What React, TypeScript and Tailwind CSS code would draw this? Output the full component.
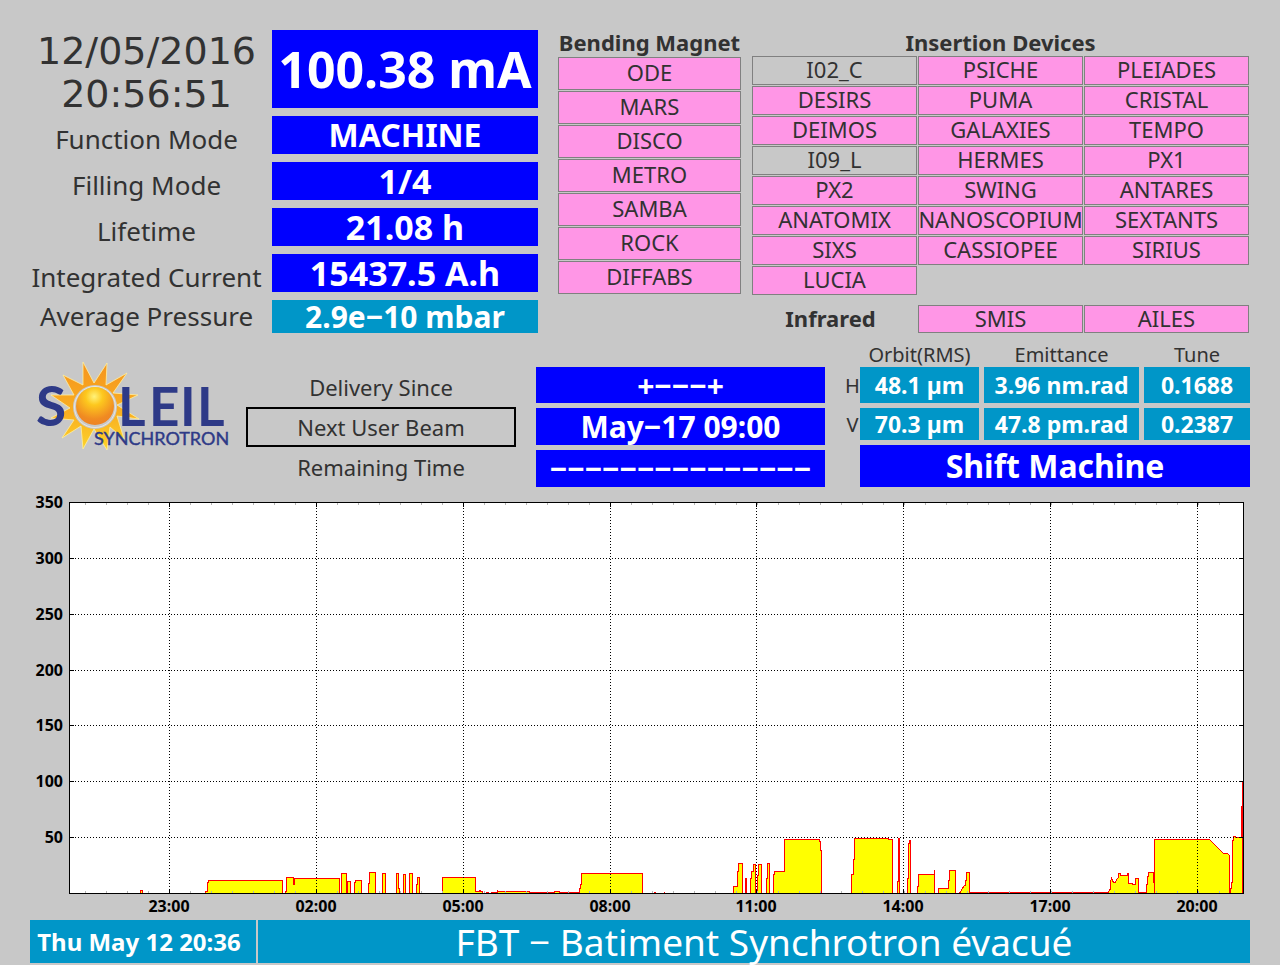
import clsx from 'clsx'

const labels = ['Function Mode', 'Filling Mode', 'Lifetime', 'Integrated Current']

const bendingMagnets = ['ODE', 'MARS', 'DISCO', 'METRO', 'SAMBA', 'ROCK', 'DIFFABS']

const insertionDevices = [
  'I02_C', 'PSICHE', 'PLEIADES',
  'DESIRS', 'PUMA', 'CRISTAL',
  'DEIMOS', 'GALAXIES', 'TEMPO',
  'I09_L', 'HERMES', 'PX1',
  'PX2', 'SWING', 'ANTARES',
  'ANATOMIX', 'NANOSCOPIUM', 'SEXTANTS',
  'SIXS', 'CASSIOPEE', 'SIRIUS',
  'LUCIA'
]

// front ends that are currently closed
const closed = ['I02_C', 'I09_L']

const beamRows = [
  { plane: 'H', orbit: '48.1 µm', emittance: '3.96 nm.rad', tune: '0.1688' },
  { plane: 'V', orbit: '70.3 µm', emittance: '47.8 pm.rad', tune: '0.2387' }
]

const yTicks = [
  [350, 502], [300, 558], [250, 614], [200, 670], [150, 725], [100, 781], [50, 837]
]

const xTicks: [string, number][] = [
  ['23:00', 169], ['02:00', 316], ['05:00', 463], ['08:00', 610],
  ['11:00', 756], ['14:00', 903], ['17:00', 1050], ['20:00', 1197]
]

const minorTicks = Array.from({ length: 55 }, (_, i) => 85 + i * 21)

// stored current over the last 24 hours, one run per fill
const runs = [
  '140,893 140,890 142,890 142,893',
  '205,893 205,891 207,891 207,882 208,882 208,880 282,880 282,893',
  '285,893 285,891 286,891 286,877 293,877 293,884 294,884 294,878 339,878 339,893',
  '341,893 341,873 346,873 346,893 347,893 347,881 350,881 350,893',
  '354,893 354,882 355,882 355,880 361,880 361,893',
  '368,893 368,883 369,883 369,872 375,872 375,893',
  '382,893 382,873 385,873 385,893',
  '396,893 396,873 398,873 398,888 399,888 399,893',
  '403,893 403,874 405,874 405,893',
  '409,893 409,873 412,873 412,893',
  '416,893 416,884 417,884 417,877 419,877 419,893',
  '442,893 442,877 475,877 475,891 479,891 479,890 480,890 480,891 482,891 482,893',
  '486,893 486,892 488,892',
  '491,893 491,892 494,892 497,892 497,890 498,891 529,891 529,892 554,892 554,891 559,891 559,892 579,892 579,888 580,888 580,884 581,884 581,873 642,873 642,893',
  '653,892 655,892',
  '663,892 664,892',
  '733,893 733,886 737,886 737,871 738,871 738,863 742,863 742,893',
  '745,893 745,878 746,878 746,893',
  '750,893 750,878 751,878 751,871 753,871 753,864 755,864 755,893',
  '757,893 757,875 758,875 758,864 761,864 761,893',
  '766,893 766,878 767,878 767,863 769,863 769,893',
  '773,893 773,874 774,874 774,871 784,871 784,839 819,839 819,841 820,841 820,850 821,850 821,893',
  '851,893 851,874 853,874 853,859 854,859 854,838 888,838 888,839 892,839 892,893',
  '897,893 897,881 898,881 898,838 899,838 899,893',
  '907,893 907,878 908,878 908,843 909,843 909,840 910,840 910,893',
  '917,893 917,886 918,886 918,874 934,874 934,869 934,893',
  '938,893 938,888 948,888 948,880 949,880 949,870 955,870 955,893',
  '958,892 960,892 961,889 964,885 965,885 965,880 966,880 966,872 969,872 969,892 1108,892 1109,889 1110,889 1110,881 1111,878 1113,882 1115,882 1116,879 1118,877 1118,873 1120,873 1120,875 1127,875 1127,873 1128,873 1128,883 1132,883 1132,884 1135,884 1135,878 1138,878 1138,892 1146,892 1146,884 1147,884 1147,876 1148,876 1148,872 1153,872 1154,892 1154,839 1209,839 1223,853 1227,853 1229,855 1229,893',
  '1230,893 1230,888 1231,888 1231,882 1232,882 1232,840 1233,840 1233,836 1235,836 1235,837 1241,837 1241,806 1242,806 1242,781 1242,893'
]

function Readout({ children, className }: { children: React.ReactNode; className?: string }) {
  return (
    <div
      className={clsx(
        'flex items-center justify-center whitespace-nowrap font-bold text-white',
        className
      )}
    >
      {children}
    </div>
  )
}

function Beamline({ name, className }: { name: string; className: string }) {
  return (
    <div
      className={clsx(
        'flex items-center justify-center border border-[#808080] pb-[2px] text-[22px]',
        closed.includes(name) ? 'bg-[#c8c8c8]' : 'bg-[#ff96e6]',
        className
      )}
    >
      {name}
    </div>
  )
}

function Logo() {
  return (
    <svg viewBox="0 0 210 110" className="w-full" role="img" aria-label="Soleil Synchrotron">
      <defs>
        <radialGradient id="ball" cx="0.48" cy="0.25" r="0.75">
          <stop offset="0" stopColor="#fff27a" />
          <stop offset="0.3" stopColor="#fdc81e" />
          <stop offset="0.8" stopColor="#f08a22" />
          <stop offset="1" stopColor="#ee8424" />
        </radialGradient>
        <linearGradient id="rays" x1="0" y1="0" x2="0" y2="1">
          <stop offset="0" stopColor="#f5941e" />
          <stop offset="0.6" stopColor="#f9b021" />
          <stop offset="1" stopColor="#fdd42a" />
        </linearGradient>
      </defs>
      <path
        d="M53 12 L64 33 L77 13 L76 35 L97 23 L83 43 L108 45 L87 55 L109 69 L87 66 L94 89 L80 77 L77 100 L64 79 L53 99 L51 76 L32 88 L44 70 L21 68 L40 58 L21 45 L44 45 L33 25 L53 35 Z"
        fill="url(#rays)"
        stroke="#fff0a0"
        strokeWidth="0.8"
      />
      <circle cx="65" cy="57" r="22" fill="#c8c8c8" />
      <circle cx="65" cy="57" r="20.5" fill="none" stroke="#f2efe4" strokeWidth="0.8" />
      <circle cx="65" cy="56" r="19" fill="url(#ball)" />
      <g fill="#2e3a87" className="font-['Lato','Noto_Sans',sans-serif]">
        <text x="6" y="76" fontSize="55" fontWeight="700">S</text>
        <text x="88" y="76" fontSize="53" fontWeight="700">L</text>
        <text x="119" y="76" fontSize="53" fontWeight="700">E</text>
        <text x="150" y="76" fontSize="53" fontWeight="700">I</text>
        <text x="167" y="76" fontSize="53" fontWeight="700">L</text>
        <text x="64" y="95" fontSize="18" fontWeight="400" stroke="#2e3a87" strokeWidth="0.4">
          SYNCHROTRON
        </text>
      </g>
    </svg>
  )
}

function CurrentChart() {
  return (
    <svg
      viewBox="30 490 1220 430"
      className="mt-[3px] w-full"
      role="img"
      aria-label="Stored current"
      shapeRendering="crispEdges"
    >
      <rect x="69.5" y="502.5" width="1174" height="391" fill="#fff" />
      <g transform="translate(0.5 0.5)">
        {runs.map((points) => (
          <polyline key={points} points={points} fill="#ff0" stroke="#f00" />
        ))}
      </g>
      <g stroke="#000" strokeDasharray="1 2">
        {yTicks.map(([value, y]) => (
          <path key={value} d={`M69 ${y}.5H1243`} />
        ))}
        {xTicks.map(([time, x]) => (
          <path key={time} d={`M${x}.5 502V893`} />
        ))}
      </g>
      {minorTicks.map((x) => (
        <path key={x} d={`M${x}.5 503v2M${x}.5 891v2`} stroke="#b4b4b4" />
      ))}
      {yTicks.map(([value, y]) => (
        <path key={value} d={`M70 ${y}.5h4M1239 ${y}.5h4`} stroke="#000" />
      ))}
      {xTicks.map(([time, x]) => (
        <path key={time} d={`M${x}.5 503v4M${x}.5 889v4`} stroke="#000" />
      ))}
      <rect x="69.5" y="502.5" width="1174" height="391" fill="none" stroke="#000" />
      <g fontSize="16" fontWeight="700" fill="#000">
        {yTicks.map(([value, y]) => (
          <text key={value} x="63" y={y + 6} textAnchor="end">{value}</text>
        ))}
        {xTicks.map(([time, x]) => (
          <text key={time} x={x} y="912" textAnchor="middle">{time}</text>
        ))}
      </g>
    </svg>
  )
}

export default function App() {
  return (
    <main className="min-h-screen bg-[#c8c8c8] px-[30px] pt-[30px] pb-[2px] font-['Noto_Sans',sans-serif] text-[#323232]">
      <section className="grid grid-cols-[517fr_183fr_498fr] gap-x-[11px]">
        <div className="grid grid-cols-[233fr_266fr] gap-x-[9px] pr-[9px]">
          <div className="flex flex-col text-center text-[26px] whitespace-nowrap">
            <div className="font-['DejaVu_Sans',sans-serif] text-[38px] leading-[43px]">
              <p>12/05/2016</p>
              <p>20:56:51</p>
            </div>
            {labels.map((label) => (
              <p key={label} className="leading-[46px]">{label}</p>
            ))}
            <p className="leading-[33px]">Average Pressure</p>
          </div>
          <div className="flex flex-col gap-2">
            <Readout className="h-[78px] bg-[#0000ff] text-[50px]">100.38 mA</Readout>
            <Readout className="h-[38px] bg-[#0000ff] text-[32px]">MACHINE</Readout>
            <Readout className="h-[38px] bg-[#0000ff] text-[34px]">1/4</Readout>
            <Readout className="h-[38px] bg-[#0000ff] text-[34px]">21.08 h</Readout>
            <Readout className="h-[38px] bg-[#0000ff] text-[34px]">15437.5 A.h</Readout>
            <Readout className="h-[33px] bg-[#0096c8] text-[30px]">2.9e−10 mbar</Readout>
          </div>
        </div>

        <div>
          <h2 className="h-[27px] text-center text-[22px] leading-[25px] font-bold whitespace-nowrap">
            Bending Magnet
          </h2>
          <div className="flex flex-col gap-px">
            {bendingMagnets.map((name) => (
              <Beamline key={name} name={name} className="h-[33px]" />
            ))}
          </div>
        </div>

        <div className="pr-px">
          <h2 className="h-[26px] text-center text-[22px] leading-[25px] font-bold">
            Insertion Devices
          </h2>
          <div className="grid grid-cols-3 gap-px">
            {insertionDevices.map((name) => (
              <Beamline key={name} name={name} className="h-[29px]" />
            ))}
          </div>
          <div className="mt-[10px] grid grid-cols-3 gap-px">
            <h2 className="pr-2 text-center text-[22px] leading-[26px] font-bold">Infrared</h2>
            <Beamline name="SMIS" className="h-[28px]" />
            <Beamline name="AILES" className="h-[28px]" />
          </div>
        </div>
      </section>

      <section className="mt-[10px] grid grid-cols-[196fr_270fr_289fr_405fr] items-end gap-x-5">
        <div className="-mr-[14px] pb-[27px]">
          <Logo />
        </div>

        <div className="text-center text-[22px] whitespace-nowrap">
          <p className="leading-[40px]">Delivery Since</p>
          <button type="button" className="block h-10 w-full border-2 border-black">
            Next User Beam
          </button>
          <p className="leading-[40px]">Remaining Time</p>
        </div>

        <div className="flex flex-col gap-[5px]">
          <Readout className="h-[36px] bg-[#0000ff] text-[30px]">+−−−+</Readout>
          <Readout className="h-[37px] bg-[#0000ff] text-[30px]">May−17 09:00</Readout>
          <Readout className="h-[37px] bg-[#0000ff] text-[30px]">−−−−−−−−−−−−−−−</Readout>
        </div>

        <div>
          <table className="w-full table-fixed border-separate border-spacing-0 text-center whitespace-nowrap">
            <colgroup>
              <col className="w-[15px]" />
              <col className="w-[119px]" />
              <col className="w-[160px]" />
              <col />
            </colgroup>
            <thead>
              <tr className="h-6 text-[20px] leading-6">
                <td />
                <th className="font-normal">Orbit(RMS)</th>
                <th className="pl-[5px] font-normal">Emittance</th>
                <th className="pl-[5px] font-normal">Tune</th>
              </tr>
            </thead>
            <tbody>
              {beamRows.map((row) => (
                <tr
                  key={row.plane}
                  className="text-[23px] leading-[32px] font-bold text-white first:h-[41px] last:h-[37px]"
                >
                  <th className="pb-1 text-[20px] font-normal text-[#323232]">{row.plane}</th>
                  <td className="border-b-[5px] border-[#c8c8c8] bg-[#0096c8]">{row.orbit}</td>
                  <td className="border-b-[5px] border-l-[5px] border-[#c8c8c8] bg-[#0096c8]">
                    {row.emittance}
                  </td>
                  <td className="border-b-[5px] border-l-[5px] border-[#c8c8c8] bg-[#0096c8]">
                    {row.tune}
                  </td>
                </tr>
              ))}
            </tbody>
          </table>
          <Readout className="ml-[15px] h-[42px] bg-[#0000ff] text-[32px]">Shift Machine</Readout>
        </div>
      </section>

      <CurrentChart />

      <footer className="grid grid-cols-[226fr_992fr] gap-x-[2px]">
        <Readout className="h-[43px] bg-[#0096c8] pr-2 text-[24px]">Thu May 12 20:36</Readout>
        <p className="flex h-[43px] items-center justify-center bg-[#0096c8] pl-5 text-[37px] whitespace-nowrap text-white">
          FBT − Batiment Synchrotron évacué
        </p>
      </footer>
    </main>
  )
}
